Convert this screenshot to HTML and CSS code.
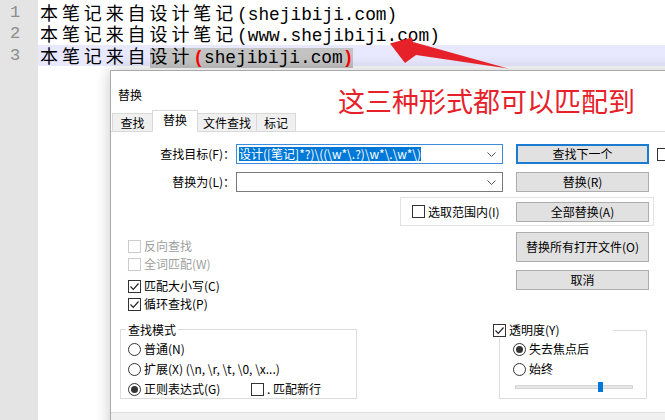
FILE: index.html
```html
<!DOCTYPE html>
<html lang="zh-CN">
<head>
  <meta charset="UTF-8">
  <meta name="viewport" content="width=device-width, initial-scale=1">
  <title>替换</title>
  <link rel="stylesheet" href="styles.css">
</head>
<body>
  <!-- 编辑器 -->
  <div class="editor">
    <div class="gutter">
      <div>1</div>
      <div>2</div>
      <div>3</div>
    </div>
    <div class="lines">
      <div class="line"><span class="cjk">本笔记来自设计笔记</span>(shejibiji.com)</div>
      <div class="line"><span class="cjk">本笔记来自设计笔记</span>(www.shejibiji.com)</div>
      <div class="line current"><span class="cjk">本笔记来自</span><span class="sel"><span class="cjk">设计</span><b class="brace">(</b>shejibiji.com<b class="brace">)</b></span></div>
    </div>
  </div>

  <!-- 替换对话框 -->
  <div class="dialog">
    <div class="title">替换</div>
    <div class="tabs">
      <span class="tab w40">查找</span>
      <span class="tab active w45">替换</span>
      <span class="tab w59">文件查找</span>
      <span class="tab w39">标记</span>
    </div>

    <div class="panel">
      <div class="row">
        <label class="field-label">查找目标(F)：</label>
        <div class="combo focus">
          <span class="picked">设计([笔记]*?)\((\w*\.?)\w*\.\w*\)</span>
          <svg class="chevron" width="9" height="5" viewBox="0 0 9 5"><polyline points="0.5,0.5 4.5,4.5 8.5,0.5" fill="none" stroke="#555" stroke-width="1"/></svg>
        </div>
        <button class="btn default">查找下一个</button>
        <span class="box far"></span>
      </div>

      <div class="row second">
        <label class="field-label">替换为(L)：</label>
        <div class="combo">
          <span></span>
          <svg class="chevron" width="9" height="5" viewBox="0 0 9 5"><polyline points="0.5,0.5 4.5,4.5 8.5,0.5" fill="none" stroke="#555" stroke-width="1"/></svg>
        </div>
        <button class="btn">替换(R)</button>
      </div>

      <div class="scope">
        <label class="check"><span class="box"></span>选取范围内(I)</label>
        <button class="btn">全部替换(A)</button>
      </div>

      <div class="middle">
        <div class="options">
          <label class="check off"><span class="box"></span>反向查找</label>
          <label class="check off"><span class="box"></span>全词匹配(W)</label>
          <label class="check gap"><span class="box on"><svg width="11" height="11" viewBox="0 0 11 11"><polyline points="1.5,5.5 4.3,8.3 9.5,2.5" fill="none" stroke="#222" stroke-width="1.2"/></svg></span>匹配大小写(C)</label>
          <label class="check"><span class="box on"><svg width="11" height="11" viewBox="0 0 11 11"><polyline points="1.5,5.5 4.3,8.3 9.5,2.5" fill="none" stroke="#222" stroke-width="1.2"/></svg></span>循环查找(P)</label>
        </div>
        <div class="side">
          <button class="btn tall">替换所有打开文件(O)</button>
          <button class="btn">取消</button>
        </div>
      </div>

      <div class="groups">
        <div class="group mode">
          <span class="legend">查找模式</span>
          <label class="radio"><span class="dot"></span>普通(N)</label>
          <label class="radio"><span class="dot"></span>扩展(X) (\n, \r, \t, \0, \x...)</label>
          <div class="radio-row">
            <label class="radio regex"><span class="dot on"></span>正则表达式(G)</label>
            <label class="check"><span class="box"></span>. 匹配新行</label>
          </div>
        </div>

        <div class="group trans">
          <label class="legend check"><span class="box on"><svg width="11" height="11" viewBox="0 0 11 11"><polyline points="1.5,5.5 4.3,8.3 9.5,2.5" fill="none" stroke="#222" stroke-width="1.2"/></svg></span>透明度(Y)</label>
          <label class="radio"><span class="dot on"></span>失去焦点后</label>
          <label class="radio"><span class="dot"></span>始终</label>
          <div class="slider"><span class="thumb"></span></div>
        </div>
      </div>
    </div>

    <div class="status"></div>
  </div>

  <!-- 标注 -->
  <svg class="arrow" width="128" height="42" viewBox="385 33 128 42">
    <polygon points="390,43.5 412,37.5 413,42 508,68.5 416,55 405,63" fill="#e62129"/>
  </svg>
  <div class="note">这三种形式都可以匹配到</div>
</body>
</html>
```

FILE: styles.css
```css
/* 基本样式重置 */
* {
  box-sizing: border-box;
  margin: 0;
  padding: 0;
}

body {
  width: 665px;
  height: 420px;
  overflow: hidden;
  position: relative;
  background: #ffffff;
  font-family: "Noto Sans CJK SC", sans-serif;
}

/* 编辑器 */
.editor {
  display: flex;
  height: 420px;
}

.gutter {
  width: 38px;
  background: #e4e4e4;
  padding-top: 1.5px;
  font-family: "Liberation Mono", monospace;
  font-size: 17px;
  color: #8c8c8c;
}

.gutter div {
  height: 21.5px;
  line-height: 21.5px;
  padding-left: 10px;
}

.lines {
  flex: 1;
  padding-top: 1.5px;
}

.line {
  height: 21.5px;
  line-height: 21.5px;
  padding-left: 2px;
  font-family: "Liberation Mono", "Noto Sans CJK SC", monospace;
  font-size: 17.8px;
  color: #000000;
  white-space: nowrap;
}

.cjk {
  font-family: "Noto Sans CJK SC", sans-serif;
  font-size: 18px;
  letter-spacing: 3.9px;
}

.current {
  background: #e8e8ff;
}

.sel {
  background: #c3c3c3;
}

.brace {
  color: #ff0000;
}

/* 对话框 */
.dialog {
  position: absolute;
  left: 110px;
  top: 70px;
  width: 580px;
  height: 370px;
  background: #ffffff;
  border: 1px solid #aaaaaa;
  box-shadow: 0 0 14px rgba(0, 0, 0, 0.22);
  font-size: 12px;
  color: #000000;
}

.title {
  height: 39px;
  padding: 15px 0 0 7px;
  line-height: 18px;
}

.tabs {
  display: flex;
  align-items: flex-end;
  height: 22px;
  margin-bottom: -1px;
  padding-left: 1px;
  position: relative;
}

.tab {
  height: 19px;
  line-height: 17px;
  text-align: center;
  background: #f0f0f0;
  border: 1px solid #d9d9d9;
  margin-right: -1px;
}

.tab.active {
  height: 22px;
  line-height: 18px;
  background: #ffffff;
  border-bottom-color: #ffffff;
  position: relative;
  z-index: 1;
}

.w40 { width: 41px; }
.w45 { width: 46px; }
.w59 { width: 60px; }
.w39 { width: 40px; }

.panel {
  border-top: 1px solid #d9d9d9;
  padding-top: 12px;
}

.row {
  display: flex;
  align-items: center;
  height: 20px;
}

.row.second {
  margin-top: 8px;
}

.field-label {
  width: 125px;
  text-align: right;
  line-height: 20px;
  padding-right: 1px;
}

.combo {
  width: 267px;
  height: 20px;
  border: 1px solid #7a7a7a;
  display: flex;
  align-items: center;
  justify-content: space-between;
  padding: 0 6px 0 2px;
}

.combo.focus {
  border-color: #3b8ddc;
}

.picked {
  background: #0078d7;
  color: #ffffff;
  line-height: 14px;
  white-space: nowrap;
}

.btn {
  width: 133px;
  height: 20px;
  background: #e1e1e1;
  border: 1px solid #adadad;
  font-family: "Noto Sans CJK SC", sans-serif;
  font-size: 12px;
  line-height: 16px;
  color: #000000;
  margin-left: 13px;
  flex-shrink: 0;
}

.btn.default {
  border: 2px solid #1a7bd1;
}

.btn.tall {
  height: 30px;
}

/* 复选框、单选框 */
.box {
  display: inline-flex;
  align-items: center;
  justify-content: center;
  width: 13px;
  height: 13px;
  border: 1px solid #333333;
  background: #ffffff;
  margin-right: 3px;
  flex-shrink: 0;
}

.box.far {
  margin-left: 8px;
}

.check,
.radio {
  display: flex;
  align-items: center;
  line-height: 18px;
  white-space: nowrap;
}

.check.off {
  color: #a0a0a0;
}

.check.off .box {
  border-color: #cccccc;
}

.check.gap {
  margin-top: 4px;
}

.dot {
  width: 13px;
  height: 13px;
  border: 1px solid #333333;
  border-radius: 50%;
  margin-right: 3px;
  display: inline-flex;
  align-items: center;
  justify-content: center;
  flex-shrink: 0;
}

.dot.on::after {
  content: '';
  width: 7px;
  height: 7px;
  border-radius: 50%;
  background: #333333;
}

.scope {
  margin: 5px 0 0 289px;
  width: 254px;
  height: 29px;
  border: 1px solid #e3e3e3;
  display: flex;
  align-items: center;
  justify-content: space-between;
  padding: 0 4px 0 11px;
}

.scope .btn {
  margin-left: 0;
}

.middle {
  display: flex;
}

.options {
  width: 388px;
  margin: 11px 0 0 17px;
}

.side {
  display: flex;
  flex-direction: column;
  gap: 8px;
  margin-top: 6px;
}

.side .btn {
  margin-left: 0;
}

/* 分组框 */
.groups {
  display: flex;
  align-items: flex-start;
  margin-top: 16px;
}

.group {
  border: 1px solid #dcdcdc;
  position: relative;
}

.group .radio {
  height: 20px;
}

.mode {
  margin-left: 9px;
  width: 237px;
  height: 70px;
  padding: 9px 0 0 7px;
}

.mode .legend {
  position: absolute;
  left: 5px;
  top: -7px;
  line-height: 14px;
  background: #ffffff;
  padding: 0 2px;
}

.radio-row {
  display: flex;
  align-items: center;
  height: 20px;
}

.radio.regex {
  width: 123px;
}

.trans {
  margin: 1px 0 0 142px;
  width: 148px;
  height: 69px;
  padding: 8px 0 0 13px;
}

.trans .legend {
  position: absolute;
  left: -7px;
  top: -9px;
  width: 120px;
  height: 16px;
  background: #ffffff;
}

.slider {
  position: relative;
  width: 118px;
  height: 4px;
  margin: 6px 0 0 2px;
  background: #e7e7e7;
  border: 1px solid #d6d6d6;
}

.thumb {
  position: absolute;
  left: 82px;
  top: -4px;
  width: 5px;
  height: 10px;
  background: #0078d7;
}

.status {
  margin-top: 13px;
  height: 20px;
  background: #f0f0f0;
  border-top: 1px solid #dfdfdf;
}

/* 标注 */
.arrow {
  position: absolute;
  left: 385px;
  top: 33px;
}

.note {
  position: absolute;
  left: 338px;
  top: 86px;
  font-size: 27px;
  line-height: 30px;
  color: #e62129;
  white-space: nowrap;
}
```
